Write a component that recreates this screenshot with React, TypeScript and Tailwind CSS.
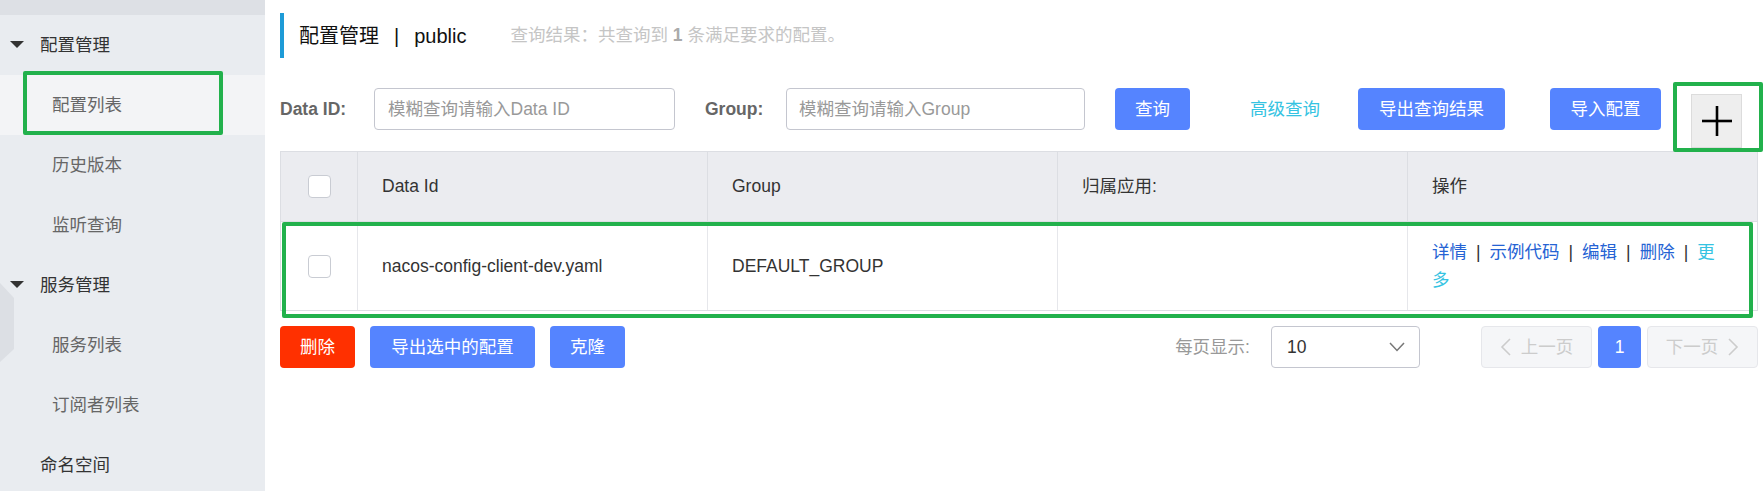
import React from 'react';

type MenuItem = { label: string; level: 'group' | 'sub' | 'top'; active?: boolean };

const menu: MenuItem[] = [
  { label: '配置管理', level: 'group' },
  { label: '配置列表', level: 'sub', active: true },
  { label: '历史版本', level: 'sub' },
  { label: '监听查询', level: 'sub' },
  { label: '服务管理', level: 'group' },
  { label: '服务列表', level: 'sub' },
  { label: '订阅者列表', level: 'sub' },
  { label: '命名空间', level: 'top' },
];

const Caret = () => (
  <svg width="14" height="8" viewBox="0 0 14 8" className="mr-[16px]">
    <polygon points="0,0 14,0 7,7" fill="#333" />
  </svg>
);

const Checkbox = () => (
  <div className="w-[23px] h-[23px] rounded-[4px] border border-[#c9ccd3] bg-white" />
);

const Sep = () => <span className="mx-[9px] text-[#333]">|</span>;

const Sidebar = () => (
  <aside className="relative w-[265px] shrink-0 bg-[#e9ecf0]">
    <div className="h-[15px] bg-[#dde0e5]" />
    {menu.map((item) => (
      <div
        key={item.label}
        className={`h-[60px] flex items-center ${item.active ? 'bg-[#f3f4f6]' : ''} ${
          item.level === 'group' ? 'pl-[10px] text-[#333]' : item.level === 'top' ? 'pl-[40px] text-[#333]' : 'pl-[52px] text-[#666]'
        }`}
      >
        {item.level === 'group' && <Caret />}
        <span>{item.label}</span>
      </div>
    ))}

    {/* decorative hexagon edge */}
    <svg width="14" height="80" viewBox="0 0 14 80" className="absolute left-0 top-[283px]">
      <polygon points="0,0 14,15 14,66 0,79" fill="#dcdfe4" />
    </svg>

    {/* highlight */}
    <div className="absolute left-[23px] top-[71px] w-[200px] h-[64px] border-[4px] border-[#22b14c] rounded-[2px]" />
  </aside>
);

const Toolbar = () => (
  <div className="mt-[30px] flex items-start h-[60px]">
    <label className="w-[94px] h-[42px] flex items-center font-bold text-[#666]">Data ID:</label>
    <input
      className="w-[301px] h-[42px] px-[13px] border border-[#c4c6cf] rounded-[4px] outline-none placeholder:text-[#999]"
      placeholder="模糊查询请输入Data ID"
    />
    <label className="ml-[30px] w-[81px] h-[42px] flex items-center font-bold text-[#666]">Group:</label>
    <input
      className="w-[299px] h-[42px] px-[12px] border border-[#c4c6cf] rounded-[4px] outline-none placeholder:text-[#999]"
      placeholder="模糊查询请输入Group"
    />
    <button className="ml-[30px] w-[75px] h-[42px] rounded-[4px] bg-[#5584ff] text-white">查询</button>
    <span className="ml-[60px] h-[42px] flex items-center text-[#35c3e2]">高级查询</span>
    <button className="ml-[38px] w-[147px] h-[42px] rounded-[4px] bg-[#5584ff] text-white">导出查询结果</button>
    <button className="ml-[45px] w-[111px] h-[42px] rounded-[4px] bg-[#5584ff] text-white">导入配置</button>
    <button className="ml-[30px] mt-[6px] w-[51px] h-[54px] bg-[#eeeeee] border border-[#dcdcdc] flex items-center justify-center">
      <svg width="30" height="30" viewBox="0 0 30 30">
        <line x1="15" y1="0" x2="15" y2="30" stroke="#000" strokeWidth="2.6" />
        <line x1="0" y1="15" x2="30" y2="15" stroke="#000" strokeWidth="2.6" />
      </svg>
    </button>
  </div>
);

const cols = 'grid grid-cols-[77px_350px_350px_350px_1fr]';

const ConfigTable = () => (
  <div className="mt-[3px] border-l border-r border-t border-[#dcdee3]">
    <div className={`${cols} h-[70px] bg-[#ebecf0] border-b border-[#dcdee3] text-[#333]`}>
      <div className="flex items-center justify-center border-r border-[#dcdee3]">
        <Checkbox />
      </div>
      <div className="flex items-center pl-[24px] border-r border-[#dcdee3]">Data Id</div>
      <div className="flex items-center pl-[24px] border-r border-[#dcdee3]">Group</div>
      <div className="flex items-center pl-[24px] border-r border-[#dcdee3]">归属应用:</div>
      <div className="flex items-center pl-[24px]">操作</div>
    </div>
    <div className={`${cols} h-[89px] bg-white border-b border-[#dcdee3] text-[#333]`}>
      <div className="flex items-center justify-center border-r border-[#e6e7eb]">
        <Checkbox />
      </div>
      <div className="flex items-center pl-[24px] border-r border-[#e6e7eb]">nacos-config-client-dev.yaml</div>
      <div className="flex items-center pl-[24px] border-r border-[#e6e7eb]">DEFAULT_GROUP</div>
      <div className="border-r border-[#e6e7eb]" />
      <div className="flex items-center pl-[24px]">
        <div className="w-[292px] leading-[28px] text-[#2563d4]">
          <span>详情</span>
          <Sep />
          <span>示例代码</span>
          <Sep />
          <span>编辑</span>
          <Sep />
          <span>删除</span>
          <Sep />
          <span className="text-[#35c3e2]">更</span>
          <span className="text-[#35c3e2]">多</span>
        </div>
      </div>
    </div>
  </div>
);

const Chevron = ({ dir }: { dir: 'left' | 'right' }) => (
  <svg width="12" height="18" viewBox="0 0 12 18">
    <polyline
      points={dir === 'left' ? '10,1 2,9 10,17' : '2,1 10,9 2,17'}
      fill="none"
      stroke="#cccccc"
      strokeWidth="1.6"
    />
  </svg>
);

const Footer = () => (
  <div className="mt-[15px] flex items-center justify-between h-[42px]">
    <div className="flex items-center gap-[15px]">
      <button className="w-[75px] h-[42px] rounded-[4px] bg-[#ff3000] text-white">删除</button>
      <button className="w-[165px] h-[42px] rounded-[4px] bg-[#5584ff] text-white">导出选中的配置</button>
      <button className="w-[75px] h-[42px] rounded-[4px] bg-[#5584ff] text-white">克隆</button>
    </div>
    <div className="flex items-center">
      <span className="text-[#999]">每页显示:</span>
      <div className="ml-[21px] w-[149px] h-[42px] border border-[#c4c6cf] rounded-[4px] flex items-center justify-between pl-[15px] pr-[14px] text-[#333]">
        <span>10</span>
        <svg width="16" height="10" viewBox="0 0 16 10">
          <polyline points="1,1 8,8.5 15,1" fill="none" stroke="#777" strokeWidth="1.5" />
        </svg>
      </div>
      <div className="ml-[61px] flex items-center gap-[6px]">
        <button className="w-[111px] h-[42px] rounded-[4px] bg-[#f5f6f8] border border-[#e6e7eb] text-[#cccccc] flex items-center justify-center gap-[9px]">
          <Chevron dir="left" />
          <span>上一页</span>
        </button>
        <button className="w-[43px] h-[42px] rounded-[4px] bg-[#5584ff] text-white">1</button>
        <button className="w-[111px] h-[42px] rounded-[4px] bg-[#f5f6f8] border border-[#e6e7eb] text-[#cccccc] flex items-center justify-center gap-[9px]">
          <span>下一页</span>
          <Chevron dir="right" />
        </button>
      </div>
    </div>
  </div>
);

export default function App() {
  return (
    <div className="flex w-[1763px] h-[491px] overflow-hidden bg-white text-[17.5px] font-['Liberation_Sans','Noto_Sans_CJK_SC',sans-serif]">
      <Sidebar />
      <main className="relative flex-1 pl-[15px] pr-[5px]">
        <div className="mt-[13px] h-[45px] border-l-[4px] border-[#1e9bd7] pl-[15px] flex items-center">
          <span className="text-[20px] text-[#111]">配置管理</span>
          <span className="text-[20px] text-[#111] mx-[15px]">|</span>
          <span className="text-[20px] text-[#111]">public</span>
          <span className="ml-[44px] text-[#c5c5c5]">
            查询结果：共查询到 <b className="text-[#aaa]">1</b> 条满足要求的配置。
          </span>
        </div>
        <Toolbar />
        <ConfigTable />
        <Footer />

        {/* highlights */}
        <div className="absolute left-[17px] top-[222px] w-[1471px] h-[96px] border-[4px] border-[#22b14c] rounded-[2px]" />
        <div className="absolute left-[1408px] top-[82px] w-[90px] h-[70px] border-[4px] border-[#22b14c] rounded-[2px]" />
      </main>
    </div>
  );
}
